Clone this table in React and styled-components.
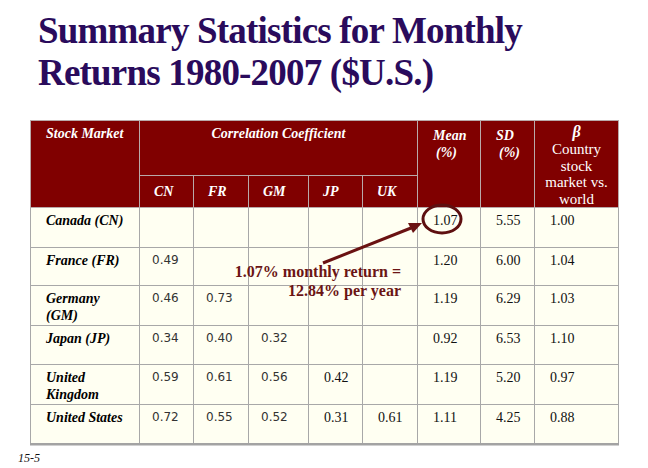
import React from "react";
import styled, { createGlobalStyle } from "styled-components";

const GlobalStyle = createGlobalStyle`
  html, body {
    margin: 0;
    padding: 0;
    background: #ffffff;
  }
  body {
    width: 648px;
    height: 468px;
    overflow: hidden;
    font-family: "Liberation Serif", "Times New Roman", serif;
  }
`;

const Slide = styled.div`
  width: 648px;
  height: 468px;
  display: flex;
  flex-direction: column;
`;

const Title = styled.h1`
  margin: 0;
  padding: 10px 0 0 38px;
  font-family: "Liberation Serif", "Times New Roman", serif;
  font-weight: bold;
  font-size: 37px;
  letter-spacing: -0.8px;
  line-height: 42px;
  color: #2a0b5c;
`;

const TableWrap = styled.div`
  position: relative;
  margin: 26px 0 0 30px;
  width: 588px;
`;

const Grid = styled.table`
  width: 588px;
  table-layout: fixed;
  border-collapse: collapse;
  background: #fffff2;
  border-left: 1px solid #8f8f8f;
  border-bottom: 2px solid #a3a3a3;
  border-right: 1px solid #b0b0b0;
  box-shadow: 0 1px 0 #d0d0d0;
`;

const HeadRow = styled.tr`
  height: ${(p) => p.h}px;
  background: #800000;
`;

const BodyRow = styled.tr`
  height: ${(p) => p.h}px;
`;

const Th = styled.th`
  padding: ${(p) => (p.center ? "4px 0 0 0" : "4px 0 0 15px")};
  vertical-align: ${(p) => (p.middle ? "middle" : "top")};
  text-align: ${(p) => (p.center ? "center" : "left")};
  color: #ffffff;
  font-family: "Liberation Serif", "Times New Roman", serif;
  font-style: italic;
  font-weight: bold;
  font-size: 14px;
  line-height: 17px;
  border: 1px solid #b9a9a9;
`;

const Indent = styled.span`
  padding-left: 3px;
`;

const BetaBox = styled.div`
  height: 86px;
  overflow: hidden;
  padding-top: 2px;
  box-sizing: border-box;
  text-align: center;
  font-style: normal;
  font-weight: normal;
  font-size: 15px;
  line-height: 16.5px;
`;

const Beta = styled.div`
  font-weight: bold;
  font-style: italic;
  font-size: 16px;
  line-height: 18px;
`;

const Label = styled.td`
  padding: 4px 10px 0 15px;
  vertical-align: top;
  font-family: "Liberation Serif", "Times New Roman", serif;
  font-style: italic;
  font-weight: bold;
  font-size: 14px;
  line-height: 17px;
  color: #000;
  border: 1px solid #a8a8a8;
`;

const Cell = styled.td`
  padding: 4px 0 0 ${(p) => (p.sans ? 12 : 15)}px;
  vertical-align: top;
  font-family: ${(p) =>
    p.sans ? `"DejaVu Sans", Verdana, sans-serif` : `"Liberation Serif", "Times New Roman", serif`};
  font-size: ${(p) => (p.sans ? 12 : 14)}px;
  line-height: 17px;
  color: ${(p) => (p.sans ? "#333" : "#111")};
  border: 1px solid #a8a8a8;
`;

const Overlay = styled.svg`
  position: absolute;
  left: 0;
  top: 0;
  pointer-events: none;
`;

const Note = styled.div`
  position: absolute;
  right: 217px;
  top: 142px;
  text-align: right;
  font-family: "Liberation Serif", "Times New Roman", serif;
  font-weight: bold;
  font-size: 16px;
  line-height: 19px;
  color: #6b1515;
  white-space: nowrap;
`;

const Footer = styled.div`
  margin: 6px 0 0 18px;
  font-family: "Liberation Serif", "Times New Roman", serif;
  font-style: italic;
  font-size: 12px;
  color: #111;
`;

const columns = [109, 54, 55, 60, 54, 55, 63, 54, 84];

// first three correlation columns (CN, FR, GM) are set in a sans face
const rows = [
  { label: "Canada (CN)", h: 40, corr: ["", "", "", "", ""], stats: ["1.07", "5.55", "1.00"] },
  { label: "France (FR)", h: 38, corr: ["0.49", "", "", "", ""], stats: ["1.20", "6.00", "1.04"] },
  { label: "Germany (GM)", h: 40, corr: ["0.46", "0.73", "", "", ""], stats: ["1.19", "6.29", "1.03"] },
  { label: "Japan (JP)", h: 39, corr: ["0.34", "0.40", "0.32", "", ""], stats: ["0.92", "6.53", "1.10"] },
  { label: "United Kingdom", h: 40, corr: ["0.59", "0.61", "0.56", "0.42", ""], stats: ["1.19", "5.20", "0.97"] },
  { label: "United States", h: 39, corr: ["0.72", "0.55", "0.52", "0.31", "0.61"], stats: ["1.11", "4.25", "0.88"] },
];

export default function App() {
  return (
    <>
      <GlobalStyle />
      <Slide>
        <Title>
          Summary Statistics for Monthly
          <br />
          Returns 1980-2007 ($U.S.)
        </Title>

        <TableWrap>
          <Grid>
            <colgroup>
              {columns.map((w, i) => (
                <col key={i} style={{ width: w }} />
              ))}
            </colgroup>
            <thead>
              <HeadRow h={55}>
                <Th rowSpan={2}>Stock Market</Th>
                <Th colSpan={5} center>
                  Correlation Coefficient
                </Th>
                <Th rowSpan={2} style={{ paddingTop: 6 }}>
                  Mean
                  <br />
                  <Indent>(%)</Indent>
                </Th>
                <Th rowSpan={2} style={{ paddingTop: 6 }}>
                  SD
                  <br />
                  <Indent>(%)</Indent>
                </Th>
                <Th rowSpan={2} center style={{ padding: 0 }}>
                  <BetaBox>
                    <Beta>β</Beta>
                    Country
                    <br />
                    stock
                    <br />
                    market vs.
                    <br />
                    world
                  </BetaBox>
                </Th>
              </HeadRow>
              <HeadRow h={32}>
                {["CN", "FR", "GM", "JP", "UK"].map((c) => (
                  <Th key={c} middle style={{ paddingTop: 0, paddingLeft: 14 }}>
                    {c}
                  </Th>
                ))}
              </HeadRow>
            </thead>
            <tbody>
              {rows.map((r) => (
                <BodyRow key={r.label} h={r.h}>
                  <Label>{r.label}</Label>
                  {r.corr.map((v, i) => (
                    <Cell key={i} sans={i < 3}>
                      {v}
                    </Cell>
                  ))}
                  {r.stats.map((v, i) => (
                    <Cell key={"s" + i}>{v}</Cell>
                  ))}
                </BodyRow>
              ))}
            </tbody>
          </Grid>

          <Overlay width="588" height="330" viewBox="0 0 588 330">
            <ellipse cx="412" cy="99" rx="19" ry="14" fill="none" stroke="#5e0f10" strokeWidth="3" />
            <line x1="293" y1="143" x2="381" y2="108" stroke="#6a1212" strokeWidth="3" />
            <polygon points="392,103 378,103 383,113" fill="#6a1212" />
          </Overlay>

          <Note>
            1.07% monthly return =
            <br />
            12.84% per year
          </Note>
        </TableWrap>

        <Footer>15-5</Footer>
      </Slide>
    </>
  );
}
